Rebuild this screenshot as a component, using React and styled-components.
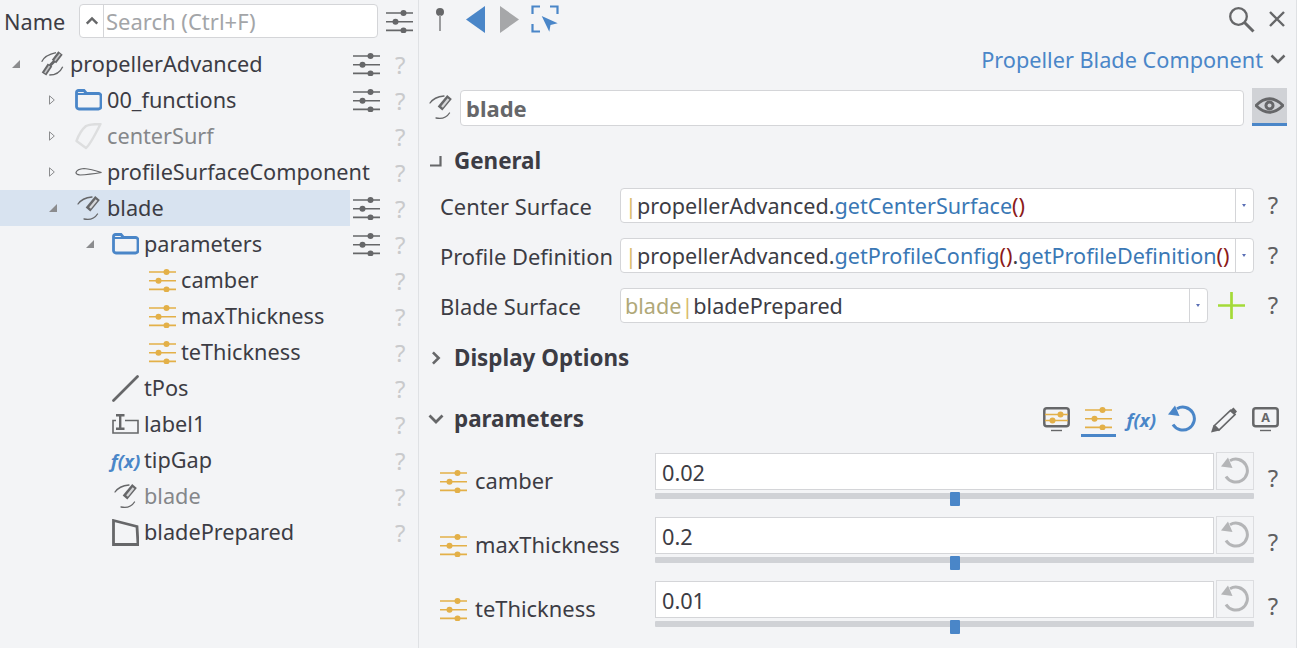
import * as React from "react"
import styled, { createGlobalStyle } from "styled-components"

const GlobalStyle = createGlobalStyle`
  html, body {
    margin: 0;
    padding: 0;
    height: 100%;
    overflow: hidden;
    background: #f3f4f6;
  }
  body {
    font-family: "Noto Sans", "Open Sans", sans-serif;
    font-size: 21.7px;
    color: #3c3c44;
  }
`

const GREY = "#666769"
const BLUE = "#4a86c8"
const GOLD = "#e3b048"

/* icons */

const Svg = styled.svg`
  display: block;
  flex: none;
`

const SlidersIcon = ({ color = GREY }) => (
  <Svg width="27" height="24" viewBox="0 0 27 24">
    <g stroke={color} strokeWidth="1.6" fill={color}>
      <path d="M0 4h27M0 12.7h27M0 21.4h27" fill="none" />
      <circle cx="17.5" cy="4" r="3" stroke="none" />
      <circle cx="9.5" cy="12.7" r="3" stroke="none" />
      <circle cx="17.5" cy="21.4" r="3" stroke="none" />
    </g>
  </Svg>
)

const FolderIcon = () => (
  <Svg width="27" height="22" viewBox="0 0 27 22">
    <path
      d="M1.500 4.500V3.500a2 2 0 0 1 2-2h5.500l2.500 3h12a2.500 2.500 0 0 1 2.500 2.500V17.500a2.500 2.500 0 0 1-2.500 2.500H4a2.500 2.500 0 0 1-2.500-2.500z"
      fill="none"
      stroke={BLUE}
      strokeWidth="2.800"
    />
    <path d="M2 5h9" stroke={BLUE} strokeWidth="2" />
  </Svg>
)

const PropellerIcon = () => (
  <Svg width="24" height="26" viewBox="0 0 24 26">
    <g fill="none" stroke={GREY}>
      <path d="M1.700 10.700Q5 4 16 1.700M9.300 24Q19 24 22.700 15.700" strokeWidth="1.300" />
      <path d="M20.500 2L14 10.500M10 14L4 23" strokeWidth="5.500" />
      <path d="M20 3L14.800 9.800M9.500 15L4.800 22" stroke="#c4c5c7" strokeWidth="1.600" />
      <path d="M14.500 10L10 14.500" strokeWidth="3" />
    </g>
  </Svg>
)

const BladeIcon = () => (
  <Svg width="24" height="26" viewBox="0 0 24 26">
    <g fill="none" stroke={GREY}>
      <path d="M1 9Q5 3 15 2M7 24Q16 26 20.500 19" strokeWidth="1.300" strokeLinecap="round" />
      <path d="M20.500 3L11 14.500" strokeWidth="6" />
      <path d="M19.500 5L13 13" stroke="#d5d6d8" strokeWidth="2.200" />
    </g>
  </Svg>
)

const SurfaceIcon = () => (
  <Svg width="27" height="27" viewBox="0 0 27 27">
    <path
      d="M25.500 1Q15 1 11 3Q5 8 1.500 18L11 25Q15 22 25.500 1z"
      fill="none"
      stroke="#dddedf"
      strokeWidth="2.400"
      strokeLinejoin="round"
    />
  </Svg>
)

const ProfileIcon = () => (
  <Svg width="27" height="10" viewBox="0 0 27 10">
    <path
      d="M1 5.500Q2 2 9 1.500Q16 2 26.500 5.500Q14 7.500 5 8Q1 7.500 1 5.500z"
      fill="#f3f4f6"
      stroke={GREY}
      strokeWidth="1.200"
    />
  </Svg>
)

const LineIcon = () => (
  <Svg width="27" height="27" viewBox="0 0 27 27">
    <path d="M1.500 25.500L25.500 1.500" stroke={GREY} strokeWidth="2.700" strokeLinecap="round" />
  </Svg>
)

const LabelIcon = () => (
  <Svg width="27" height="20" viewBox="0 0 27 20">
    <path d="M4 6.500H1v12.500h25V6.500H13" fill="none" stroke={GREY} strokeWidth="1.600" />
    <path d="M4 1.200h8.500M4 14.800h8.500M8.200 1.200v13.600" fill="none" stroke={GREY} strokeWidth="2.400" />
  </Svg>
)

const QuadIcon = () => (
  <Svg width="27" height="27" viewBox="0 0 27 27">
    <path d="M1.500 1.500L25 7.500L26 25.500H1.500z" fill="none" stroke={GREY} strokeWidth="2.800" />
  </Svg>
)

const PinIcon = () => (
  <Svg width="10" height="25" viewBox="0 0 10 25">
    <circle cx="5" cy="5" r="4" fill={GREY} />
    <path d="M5 8v16" stroke="#9b9c9e" strokeWidth="2" />
  </Svg>
)

const TriangleIcon = ({ flip, color }) => (
  <Svg width="19" height="27" viewBox="0 0 19 27">
    <path d={flip ? "M19 0V27L0 13.500z" : "M0 0V27L19 13.500z"} fill={color} />
  </Svg>
)

const TargetIcon = () => (
  <Svg width="28" height="28" viewBox="0 0 28 28">
    <path d="M1.500 9V1.500H9M19 1.500h7.500V9M1.500 19v7.500H9" fill="none" stroke={BLUE} strokeWidth="2.200" />
    <path d="M10.700 11L26.700 18.300L19.500 20L18.300 26.700z" fill={BLUE} />
  </Svg>
)

const SearchIcon = () => (
  <Svg width="27" height="27" viewBox="0 0 27 27">
    <circle cx="10.500" cy="10.500" r="8.300" fill="none" stroke={GREY} strokeWidth="2.300" />
    <path d="M16.500 16.500L25.500 25.500" stroke={GREY} strokeWidth="3" />
  </Svg>
)

const CloseIcon = () => (
  <Svg width="16" height="16" viewBox="0 0 16 16">
    <path d="M1 1l14 14M15 1L1 15" stroke={GREY} strokeWidth="2.400" />
  </Svg>
)

const ChevronIcon = ({ dir = "down", size = 16, width = 2.500 }) => {
  const paths = {
    down: "M1.500 4.500L8 11L14.500 4.500",
    up: "M2 11L8 5L14 11",
    right: "M4.500 1.500L11 8L4.500 14.500",
  }
  return (
    <Svg width={size} height={size} viewBox="0 0 16 16">
      <path d={paths[dir]} fill="none" stroke={GREY} strokeWidth={width} />
    </Svg>
  )
}

const CornerIcon = () => (
  <Svg width="12" height="12" viewBox="0 0 12 12">
    <path d="M0 10.500H10.500V1" fill="none" stroke={GREY} strokeWidth="2.200" />
  </Svg>
)

const EyeIcon = () => (
  <Svg width="29" height="17" viewBox="0 0 29 17">
    <path d="M1 8.500Q14.500 -5 28 8.500Q14.500 22 1 8.500z" fill="none" stroke={GREY} strokeWidth="2.800" />
    <circle cx="14.500" cy="8.500" r="5" fill={GREY} />
    <circle cx="14.500" cy="8.500" r="2" fill="#d0d2d6" />
  </Svg>
)

const PlusIcon = () => (
  <Svg width="27" height="27" viewBox="0 0 27 27">
    <path d="M0 13.500h27M13.500 0v27" stroke="#a4da38" strokeWidth="2.700" />
  </Svg>
)

const UndoIcon = ({ color }) => (
  <Svg width="28" height="28" viewBox="0 0 28 28">
    <path d="M9 3.700A11.500 11.500 0 1 1 5 19.500" fill="none" stroke={color} strokeWidth="3" />
    <path d="M7 .5L11.500 11L0 9.500z" fill={color} />
  </Svg>
)

const MonitorSlidersIcon = () => (
  <Svg width="27" height="25" viewBox="0 0 27 25">
    <rect x="1.300" y="1.300" width="24.400" height="18" rx="2.500" fill="none" stroke={GREY} strokeWidth="2.500" />
    <path d="M2 7.500h23M2 13.500h23" stroke={GOLD} strokeWidth="1.600" />
    <circle cx="17.500" cy="7.500" r="3" fill={GOLD} />
    <circle cx="9.500" cy="13.500" r="3" fill={GOLD} />
    <path d="M8 23.500h11" stroke={GREY} strokeWidth="1.400" />
  </Svg>
)

const PencilIcon = () => (
  <Svg width="27" height="27" viewBox="0 0 27 27">
    <path d="M4.500 19.500L20.500 4.500L25 8.500L9 24z" fill="none" stroke={GREY} strokeWidth="1.700" />
    <path d="M1 26.500L3.500 19L9.500 24.500z" fill={GREY} />
    <path d="M20 4.500L23.500 1.500L27 5.500L24.500 8.500z" fill={GREY} />
  </Svg>
)

const MonitorTextIcon = () => (
  <Svg width="27" height="25" viewBox="0 0 27 25">
    <rect x="1.300" y="1.300" width="24.400" height="18" rx="2.500" fill="none" stroke={GREY} strokeWidth="2.500" />
    <text x="13.500" y="15" textAnchor="middle" fontSize="12.500" fontWeight="700" fill={GREY}>
      A
    </text>
    <path d="M8 23.500h11" stroke={GREY} strokeWidth="1.400" />
  </Svg>
)

/* page frame */

const Page = styled.div`
  display: flex;
  width: 1297px;
  height: 648px;
  overflow: hidden;
`

/* tree panel */

const TreePanel = styled.aside`
  flex: none;
  width: 418px;
  border-right: 1px solid #dfe1e4;
`

const TreeHeader = styled.div`
  display: flex;
  align-items: center;
  height: 46px;
  padding: 0 5px 4px 4px;
  box-sizing: border-box;
`

const NameTitle = styled.span`
  flex: none;
  width: 75px;
`

const SearchBox = styled.div`
  display: flex;
  align-items: stretch;
  width: 300px;
  height: 34px;
  margin-right: 8px;
  background: #fff;
  border: 1px solid #d4d5d8;
  border-radius: 4px;
  box-sizing: border-box;
`

const SearchToggle = styled.div`
  display: flex;
  align-items: center;
  justify-content: center;
  width: 23px;
  border-right: 1px solid #d4d5d8;
`

const SearchText = styled.span`
  align-self: center;
  padding-left: 2px;
  color: #a3a5a8;
  font-size: 22px;
`

const Tree = styled.div`
  display: flex;
  flex-direction: column;
`

const Row = styled.div`
  display: flex;
  align-items: stretch;
  height: 36px;
`

const RowMain = styled.div`
  display: flex;
  flex: none;
  align-items: center;
  width: 350px;
  padding-left: ${(p) => 12 + p.$level * 37}px;
  box-sizing: border-box;
  background: ${(p) => (p.$selected ? "#d8e3f0" : "transparent")};
  color: ${(p) => (p.$dim ? "#85878a" : "inherit")};
  white-space: nowrap;
`

const RowName = styled.span`
  padding-bottom: 2px;
`

const Expander = styled.span`
  display: flex;
  flex: none;
  align-items: center;
  width: 26px;
`

const IconSlot = styled.span`
  display: flex;
  flex: none;
  align-items: center;
  justify-content: center;
  width: 27px;
  margin-right: 5px;
`

const FxGlyph = styled.span`
  color: ${BLUE};
  font-weight: 700;
  font-style: italic;
  font-size: 18.500px;
  white-space: nowrap;
`

const RowSide = styled.div`
  display: flex;
  flex: 1;
  align-items: center;
  padding-left: 3px;
`

const SideSlot = styled.span`
  display: block;
  flex: none;
  width: 27px;
  height: 24px;
`

const TreeHelp = styled.span`
  margin-left: 15px;
  color: #c9cacc;
  font-size: 24px;
`

const TriExpanded = () => (
  <Svg width="8" height="8" viewBox="0 0 8 8">
    <path d="M0 8L8 0V8z" fill="#8b8c8e" />
  </Svg>
)

const TriCollapsed = () => (
  <Svg width="6" height="10" viewBox="0 0 6 10">
    <path d="M.5 .8V9.200L5.300 5z" fill="none" stroke="#8b8c8e" strokeWidth="1" />
  </Svg>
)

const treeRows = [
  { level: 0, open: true, icon: <PropellerIcon />, name: "propellerAdvanced", sliders: true },
  { level: 1, open: false, icon: <FolderIcon />, name: "00_functions", sliders: true },
  { level: 1, open: false, icon: <SurfaceIcon />, name: "centerSurf", dim: true },
  { level: 1, open: false, icon: <ProfileIcon />, name: "profileSurfaceComponent" },
  { level: 1, open: true, icon: <BladeIcon />, name: "blade", sliders: true, selected: true },
  { level: 2, open: true, icon: <FolderIcon />, name: "parameters", sliders: true },
  { level: 3, icon: <SlidersIcon color={GOLD} />, name: "camber" },
  { level: 3, icon: <SlidersIcon color={GOLD} />, name: "maxThickness" },
  { level: 3, icon: <SlidersIcon color={GOLD} />, name: "teThickness" },
  { level: 2, icon: <LineIcon />, name: "tPos" },
  { level: 2, icon: <LabelIcon />, name: "label1" },
  { level: 2, icon: <FxGlyph>f(x)</FxGlyph>, name: "tipGap" },
  { level: 2, icon: <BladeIcon />, name: "blade", dim: true },
  { level: 2, icon: <QuadIcon />, name: "bladePrepared" },
]

/* properties panel */

const PropsPanel = styled.main`
  flex: 1;
  min-width: 0;
  border-right: 1px solid #dfe1e4;
`

const TopBar = styled.div`
  display: flex;
  align-items: center;
  height: 38px;
  padding: 0 11px 0 16px;
`

const TopGroup = styled.div`
  display: flex;
  align-items: center;
  gap: ${(p) => p.$gap}px;
  margin-left: ${(p) => p.$left || 0}px;
`

const TopRightGroup = styled(TopGroup)`
  margin-left: auto;
`

const ComponentChooser = styled.div`
  display: flex;
  align-items: center;
  justify-content: flex-end;
  gap: 7px;
  height: 44px;
  padding-right: 10px;
  padding-bottom: 2px;
  box-sizing: border-box;
  color: ${BLUE};
`

const NameRow = styled.div`
  display: flex;
  align-items: center;
  height: 38px;
  margin-top: 6px;
  padding-left: 10px;
`

const NameInput = styled.div`
  display: flex;
  align-items: center;
  width: 784px;
  height: 36px;
  margin-top: 1px;
  margin-left: 7px;
  padding-top: 1px;
  padding-left: 5px;
  background: #fff;
  border: 1px solid #d4d5d8;
  border-radius: 4px;
  box-sizing: border-box;
  color: #66676a;
  font-weight: 700;
  font-size: 22px;
`

const EyeToggle = styled.div`
  display: flex;
  align-items: center;
  justify-content: center;
  width: 35px;
  height: 38px;
  margin-left: 8px;
  background: #d0d2d6;
  border-bottom: 3px solid ${BLUE};
  box-sizing: border-box;
`

const SectionHeader = styled.div`
  display: flex;
  align-items: center;
  height: 36px;
  margin-top: ${(p) => p.$top}px;
  padding-left: 10px;
  font-weight: 700;
  font-size: 22.400px;
`

const SectionTitle = styled.span`
  padding-bottom: 2px;
`

const SectionMark = styled.span`
  display: flex;
  flex: none;
  align-items: center;
  justify-content: center;
  width: 14px;
  margin-right: 11px;
`

const ViewTabs = styled.div`
  display: flex;
  align-items: center;
  margin-left: auto;
  padding-right: 17px;
  font-weight: 400;
`

const ViewSlot = styled.div`
  display: flex;
  flex: none;
  align-items: center;
  justify-content: center;
  margin-left: ${(p) => p.$left || 0}px;
`

const ViewTab = styled.div`
  display: flex;
  align-items: center;
  justify-content: center;
  width: 35px;
  height: 36px;
  margin-left: 11px;
  box-sizing: border-box;
  border-bottom: 3px solid ${BLUE};
`

const PropList = styled.div`
  display: flex;
  flex-direction: column;
  gap: 15px;
  margin-top: 9px;
  padding-left: 21px;
`

const PropRow = styled.div`
  display: flex;
  align-items: center;
  height: 35px;
`

const PropLabel = styled.span`
  flex: none;
  width: 180px;
  padding-top: 2px;
  font-size: 21.900px;
`

const Combo = styled.div`
  display: flex;
  flex: none;
  align-items: stretch;
  width: ${(p) => p.$width}px;
  height: 35px;
  background: #fff;
  border: 1px solid #d4d5d8;
  border-radius: 4px;
  box-sizing: border-box;
`

const ComboText = styled.div`
  flex: 1;
  min-width: 0;
  padding-left: 4px;
  font-size: 21.600px;
  line-height: 33px;
  white-space: nowrap;
  overflow: hidden;
`

const ComboArrow = styled.div`
  position: relative;
  flex: none;
  width: 17px;
  border-left: 1px solid #d4d5d8;

  &::after {
    content: "";
    position: absolute;
    left: 6px;
    top: 15px;
    border-left: 2.500px solid transparent;
    border-right: 2.500px solid transparent;
    border-top: 3px solid #5a6fb5;
  }
`

const Scope = styled.span`
  color: #b0a878;
`

const Bar = styled.span`
  color: #d9bc6c;
`

const Method = styled.span`
  color: #3a78b5;
`

const Parens = styled.span`
  color: #8b1a1a;
`

const Help = styled.span`
  flex: none;
  width: 20px;
  margin-left: ${(p) => p.$left}px;
  padding-bottom: ${(p) => p.$lift || 0}px;
  color: #5f6062;
  font-size: 24px;
  text-align: center;
`

const AddButton = styled.span`
  display: block;
  flex: none;
  margin-left: 10px;
`

const ParamList = styled.div`
  display: flex;
  flex-direction: column;
  margin-top: 15px;
  padding-left: 21px;
`

const ParamRow = styled.div`
  display: flex;
  align-items: center;
  height: 64px;
`

const ParamLabel = styled.div`
  display: flex;
  flex: none;
  align-items: center;
  gap: 8px;
  width: 215px;
  padding-bottom: 7px;
  font-size: 21.900px;
`

const ParamControl = styled.div`
  display: flex;
  flex: none;
  flex-direction: column;
  width: 599px;
  height: 64px;
`

const ParamInputs = styled.div`
  display: flex;
  height: 38px;
`

const ValueInput = styled.div`
  flex: 1;
  height: 37px;
  margin-top: 1px;
  padding-left: 6px;
  background: #fff;
  border: 1px solid #d4d5d8;
  box-sizing: border-box;
  line-height: 37px;
`

const ResetButton = styled.div`
  display: flex;
  flex: none;
  align-items: center;
  justify-content: center;
  width: 38px;
  margin-left: 2px;
  border: 1px solid #dcdde0;
  box-sizing: border-box;
`

const Track = styled.div`
  position: relative;
  height: 6px;
  margin-top: 3px;
  background: #d0d2d6;
  border-radius: 1px;
`

const Thumb = styled.span`
  position: absolute;
  left: 295px;
  top: -1px;
  width: 10px;
  height: 14px;
  background: ${BLUE};
  border-radius: 1px;
`

const params = [
  { name: "camber", value: "0.02" },
  { name: "maxThickness", value: "0.2" },
  { name: "teThickness", value: "0.01" },
]

const MethodCall = ({ name }) => (
  <>
    <Method>{name}</Method>
    <Parens>()</Parens>
  </>
)

const App = () => (
  <Page>
    <GlobalStyle />
    <TreePanel>
      <TreeHeader>
        <NameTitle>Name</NameTitle>
        <SearchBox>
          <SearchToggle>
            <ChevronIcon dir="up" size={14} width={2.800} />
          </SearchToggle>
          <SearchText>Search (Ctrl+F)</SearchText>
        </SearchBox>
        <SlidersIcon />
      </TreeHeader>
      <Tree>
        {treeRows.map((row, i) => (
          <Row key={i}>
            <RowMain $level={row.level} $selected={row.selected} $dim={row.dim}>
              <Expander>
                {row.open === true && <TriExpanded />}
                {row.open === false && <TriCollapsed />}
              </Expander>
              <IconSlot>{row.icon}</IconSlot>
              <RowName>{row.name}</RowName>
            </RowMain>
            <RowSide>
              <SideSlot>{row.sliders && <SlidersIcon />}</SideSlot>
              <TreeHelp>?</TreeHelp>
            </RowSide>
          </Row>
        ))}
      </Tree>
    </TreePanel>
    <PropsPanel>
      <TopBar>
        <PinIcon />
        <TopGroup $gap={15} $left={21}>
          <TriangleIcon flip color={BLUE} />
          <TriangleIcon color="#a6a7a9" />
        </TopGroup>
        <TopGroup $gap={0} $left={12}>
          <TargetIcon />
        </TopGroup>
        <TopRightGroup $gap={14}>
          <SearchIcon />
          <CloseIcon />
        </TopRightGroup>
      </TopBar>
      <ComponentChooser>
        Propeller Blade Component
        <ChevronIcon />
      </ComponentChooser>
      <NameRow>
        <BladeIcon />
        <NameInput>blade</NameInput>
        <EyeToggle>
          <EyeIcon />
        </EyeToggle>
      </NameRow>
      <SectionHeader $top={17}>
        <SectionMark>
          <CornerIcon />
        </SectionMark>
        <SectionTitle>General</SectionTitle>
      </SectionHeader>
      <PropList>
        <PropRow>
          <PropLabel>Center Surface</PropLabel>
          <Combo $width={634}>
            <ComboText>
              <Bar>|</Bar>propellerAdvanced.
              <MethodCall name="getCenterSurface" />
            </ComboText>
            <ComboArrow />
          </Combo>
          <Help $left={9} $lift={3}>?</Help>
        </PropRow>
        <PropRow>
          <PropLabel>Profile Definition</PropLabel>
          <Combo $width={634}>
            <ComboText>
              <Bar>|</Bar>propellerAdvanced.
              <MethodCall name="getProfileConfig" />.
              <MethodCall name="getProfileDefinition" />
            </ComboText>
            <ComboArrow />
          </Combo>
          <Help $left={9} $lift={3}>?</Help>
        </PropRow>
        <PropRow>
          <PropLabel>Blade Surface</PropLabel>
          <Combo $width={588}>
            <ComboText>
              <Scope>blade</Scope>
              <Bar>|</Bar>bladePrepared
            </ComboText>
            <ComboArrow />
          </Combo>
          <AddButton>
            <PlusIcon />
          </AddButton>
          <Help $left={18} $lift={3}>?</Help>
        </PropRow>
      </PropList>
      <SectionHeader $top={17}>
        <SectionMark>
          <ChevronIcon dir="right" size={14} width={3} />
        </SectionMark>
        <SectionTitle>Display Options</SectionTitle>
      </SectionHeader>
      <SectionHeader $top={25}>
        <SectionMark>
          <ChevronIcon dir="down" size={16} width={2.800} />
        </SectionMark>
        <SectionTitle>parameters</SectionTitle>
        <ViewTabs>
          <ViewSlot>
            <MonitorSlidersIcon />
          </ViewSlot>
          <ViewTab>
            <SlidersIcon color={GOLD} />
          </ViewTab>
          <ViewSlot $left={11}>
            <FxGlyph>f(x)</FxGlyph>
          </ViewSlot>
          <ViewSlot $left={12}>
            <UndoIcon color={BLUE} />
          </ViewSlot>
          <ViewSlot $left={14}>
            <PencilIcon />
          </ViewSlot>
          <ViewSlot $left={15}>
            <MonitorTextIcon />
          </ViewSlot>
        </ViewTabs>
      </SectionHeader>
      <ParamList>
        {params.map((p) => (
          <ParamRow key={p.name}>
            <ParamLabel>
              <SlidersIcon color={GOLD} />
              {p.name}
            </ParamLabel>
            <ParamControl>
              <ParamInputs>
                <ValueInput>{p.value}</ValueInput>
                <ResetButton>
                  <UndoIcon color="#b4b5b7" />
                </ResetButton>
              </ParamInputs>
              <Track>
                <Thumb />
              </Track>
            </ParamControl>
            <Help $left={9} $lift={14}>?</Help>
          </ParamRow>
        ))}
      </ParamList>
    </PropsPanel>
  </Page>
)

export default App
